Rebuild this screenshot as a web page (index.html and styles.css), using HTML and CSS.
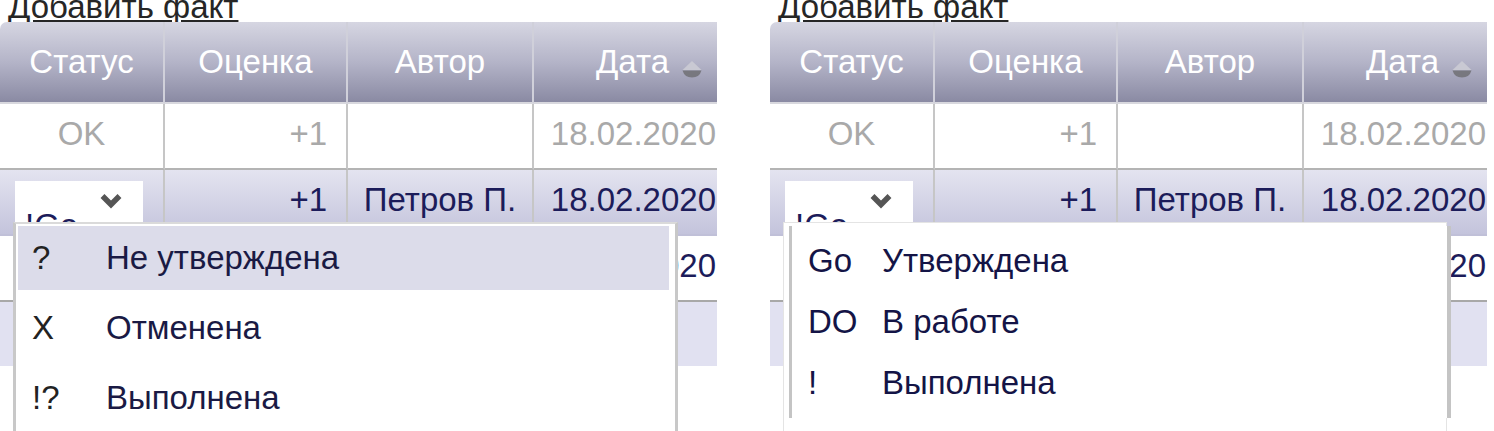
FILE: index.html
```html
<!DOCTYPE html>
<html lang="ru">
<head>
    <meta charset="UTF-8">
    <meta name="viewport" content="width=device-width, initial-scale=1.0">
    <title>Факты</title>
    <link rel="stylesheet" href="styles.css">
</head>
<body>
    <div class="shots">
        <!-- left: "Не утверждена" list -->
        <section class="panel">
            <a class="add-link" href="#">Добавить факт</a>
            <div class="grid-wrap">
                <table class="facts">
                    <colgroup>
                        <col class="c-status"><col class="c-mark"><col class="c-author"><col class="c-date">
                    </colgroup>
                    <thead>
                        <tr>
                            <th>Статус</th>
                            <th>Оценка</th>
                            <th>Автор</th>
                            <th class="sorted">Дата<svg class="sort-icon" width="20" height="17" viewBox="0 0 20 17"><path d="M10 0 L19.5 9 H0.5 Z" fill="#c9c9d3"/><path d="M0.5 9.5 H19.5 Q17.5 16.5 10 16.5 Q2.5 16.5 0.5 9.5 Z" fill="#78787f"/></svg></th>
                        </tr>
                    </thead>
                    <tbody>
                        <tr class="row-done">
                            <td class="status">OK</td>
                            <td class="num">+1</td>
                            <td class="author">&nbsp;</td>
                            <td class="date">18.02.2020</td>
                        </tr>
                        <tr class="row-edit">
                            <td class="select-cell">
                                <div class="select">
                                    <span class="select-value">!Go</span>
                                    <svg class="chevron" width="22" height="18" viewBox="0 0 22 18"><path d="M2.5 4 L11 12.5 L19.5 4" stroke="#555" stroke-width="5.5" fill="none"/></svg>
                                </div>
                            </td>
                            <td class="num">+1</td>
                            <td class="author">Петров П.</td>
                            <td class="date">18.02.2020</td>
                        </tr>
                        <tr class="row-plain">
                            <td>&nbsp;</td>
                            <td class="num">&nbsp;</td>
                            <td class="author">&nbsp;</td>
                            <td class="date">18.02.2020</td>
                        </tr>
                        <tr class="row-alt">
                            <td>&nbsp;</td><td>&nbsp;</td><td>&nbsp;</td><td>&nbsp;</td>
                        </tr>
                    </tbody>
                </table>

                <ul class="menu menu-left">
                    <li class="active"><span class="code">?</span><span class="label">Не утверждена</span></li>
                    <li><span class="code">X</span><span class="label">Отменена</span></li>
                    <li><span class="code">!?</span><span class="label">Выполнена</span></li>
                </ul>
            </div>
        </section>

        <!-- right: "Утверждена" list -->
        <section class="panel">
            <a class="add-link" href="#">Добавить факт</a>
            <div class="grid-wrap">
                <table class="facts">
                    <colgroup>
                        <col class="c-status"><col class="c-mark"><col class="c-author"><col class="c-date">
                    </colgroup>
                    <thead>
                        <tr>
                            <th>Статус</th>
                            <th>Оценка</th>
                            <th>Автор</th>
                            <th class="sorted">Дата<svg class="sort-icon" width="20" height="17" viewBox="0 0 20 17"><path d="M10 0 L19.5 9 H0.5 Z" fill="#c9c9d3"/><path d="M0.5 9.5 H19.5 Q17.5 16.5 10 16.5 Q2.5 16.5 0.5 9.5 Z" fill="#78787f"/></svg></th>
                        </tr>
                    </thead>
                    <tbody>
                        <tr class="row-done">
                            <td class="status">OK</td>
                            <td class="num">+1</td>
                            <td class="author">&nbsp;</td>
                            <td class="date">18.02.2020</td>
                        </tr>
                        <tr class="row-edit">
                            <td class="select-cell">
                                <div class="select">
                                    <span class="select-value">!Go</span>
                                    <svg class="chevron" width="22" height="18" viewBox="0 0 22 18"><path d="M2.5 4 L11 12.5 L19.5 4" stroke="#555" stroke-width="5.5" fill="none"/></svg>
                                </div>
                            </td>
                            <td class="num">+1</td>
                            <td class="author">Петров П.</td>
                            <td class="date">18.02.2020</td>
                        </tr>
                        <tr class="row-plain">
                            <td>&nbsp;</td>
                            <td class="num">&nbsp;</td>
                            <td class="author">&nbsp;</td>
                            <td class="date">18.02.2020</td>
                        </tr>
                        <tr class="row-alt">
                            <td>&nbsp;</td><td>&nbsp;</td><td>&nbsp;</td><td>&nbsp;</td>
                        </tr>
                    </tbody>
                </table>

                <div class="menu-right">
                    <ul class="menu">
                        <li><span class="code">Go</span><span class="label">Утверждена</span></li>
                        <li><span class="code">DO</span><span class="label">В работе</span></li>
                        <li><span class="code">!</span><span class="label">Выполнена</span></li>
                    </ul>
                </div>
            </div>
        </section>
    </div>
</body>
</html>
```

FILE: styles.css
```css
body {
    margin: 0;
    font-family: "Liberation Sans", Arial, sans-serif;
    background: #fff;
    overflow: hidden;
}
.shots {
    display: flex;
    gap: 53px;
    margin-top: -8px;
}
.panel {
    width: 717px;
    height: 450px;
    overflow: hidden;
    flex: none;
}
.add-link {
    display: block;
    padding-left: 8px;
    font-size: 33px;
    line-height: 30px;
    color: #262626;
    text-decoration: underline;
    white-space: nowrap;
}
.grid-wrap {
    position: relative;
}

/* table */
.facts {
    width: 717px;
    table-layout: fixed;
    border-collapse: separate;
    border-spacing: 0;
    font-size: 33px;
}
.c-status { width: 165px; }
.c-mark { width: 183px; }
.c-author { width: 186px; }
.c-date { width: 183px; }
.facts th {
    padding: 0;
    line-height: 80px;
    font-weight: normal;
    color: #fff;
    white-space: nowrap;
    background: linear-gradient(#d6d6e2, #b4b4c8 50%, #8a8aa3);
    border-right: 2px solid #d0d0da;
    border-bottom: 2px solid #d8d8de;
}
.facts th:first-child {
    border-top-left-radius: 7px;
}
.facts th:last-child {
    border-right: none;
}
.facts th.sorted {
    text-align: right;
    padding-right: 15px;
}
.sort-icon {
    margin-left: 13px;
    vertical-align: -5px;
}
.facts td {
    padding: 0 0 4px;
    line-height: 60px;
    white-space: nowrap;
    border-right: 2px solid #c6c6c6;
    border-bottom: 2px solid #b4b4b4;
    color: #1c1c5a;
}
.facts td:last-child {
    border-right: none;
}
.status { text-align: center; }
.facts td.num { text-align: right; padding-right: 19px; }
.author { text-align: center; }
.facts td.date { text-align: right; padding-right: 1px; }

.row-done td {
    color: #a9a9a9;
}
.row-edit td {
    background: linear-gradient(#e4e4f0, #c4c4dc);
    border-bottom-color: #c0c0d8;
}
.row-plain td {
    border-bottom-color: #a8a8a8;
}
.row-alt td {
    background: #e1e1f1;
    border-bottom: none;
    border-right-color: #e1e1f1;
}

/* select in row */
.facts td.select-cell {
    padding: 0;
    vertical-align: top;
    line-height: normal;
}
.select {
    margin: 11px 0 0 15px;
    width: 128px;
    height: 52px;
    background: #fff;
    display: flex;
    justify-content: space-between;
}
.select-value {
    align-self: flex-end;
    margin-bottom: -9px;
    padding-left: 10px;
    font-size: 33px;
    line-height: 33px;
    color: #1c1c5a;
}
.chevron {
    margin: 11px 21px 0 0;
}

/* dropdowns */
.menu {
    list-style: none;
    margin: 0;
    font-size: 33px;
}
.menu li {
    display: flex;
    align-items: center;
    white-space: nowrap;
}
.menu .code {
    flex: none;
    width: 74px;
}
.menu-left {
    position: absolute;
    left: 13px;
    top: 200px;
    width: 665px;
    height: 240px;
    box-sizing: border-box;
    padding: 2px 6px 0 2px;
    background: #fff;
    border-left: 3px solid #c8c8c8;
    border-right: 3px solid #c8c8c8;
    border-top: 2px solid #dadada;
    color: #1a1a44;
}
.menu-left li {
    height: 64px;
    margin-bottom: 6px;
    padding-left: 14px;
}
.menu-left li.active {
    background: #dcdcea;
}
.menu-left .code {
    color: #222;
}
.menu-right {
    position: absolute;
    left: 13px;
    top: 200px;
    width: 664px;
    height: 240px;
    box-sizing: border-box;
    background: #fff;
    border: 1px solid #e4e4e4;
}
.menu-right .menu {
    margin: 3px -5px 0 5px;
    padding: 4px 0 5px 16px;
    border-left: 3px solid #c4c4c4;
    border-right: 4px solid #c4c4c4;
    background: #fff;
    color: #141446;
}
.menu-right li {
    height: 61px;
}
```
